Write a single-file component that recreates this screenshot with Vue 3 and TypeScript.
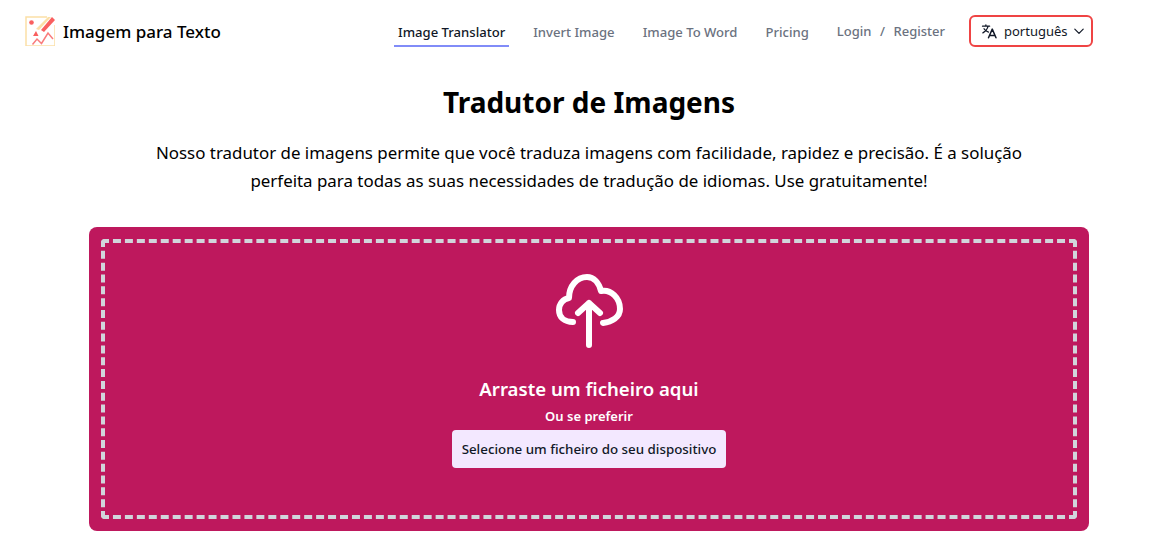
<template>
  <div class="page">
    <header class="topbar">
      <a class="brand">
        <svg class="brand-logo" viewBox="0 0 30 30" width="30" height="30">
          <path d="M22 1H1v29h29V9" fill="none" stroke="#fbdfa6" stroke-width="1.500" />
          <path d="M11 13 L23 1 L26 1 L14 14 Z" fill="#fbdfa6" />
          <path d="M16 14 L27 1 L30 4 L19 16 Z" fill="#f95f5f" />
          <circle cx="6.500" cy="6.500" r="2.300" fill="#f95f5f" />
          <path d="M8 20 L11 15 L13.500 20 Z" fill="#f95f5f" />
          <path d="M7.500 28.500 L12 23 L16.500 27.500 L23 17 L28 23" fill="none" stroke="#f97c7c" stroke-width="1.500" />
        </svg>
        <span class="brand-name">Imagem para Texto</span>
      </a>
      <nav class="nav">
        <a v-for="item in links" :key="item.label" class="nav-link" :class="{ active: item.active }">{{ item.label }}</a>
        <div class="auth">
          <a>Login</a>
          <span>/</span>
          <a>Register</a>
        </div>
        <button class="lang" type="button">
          <svg viewBox="0 0 24 24" width="18" height="18" fill="none" stroke="#111827" stroke-width="2" stroke-linecap="round" stroke-linejoin="round">
            <path d="M2 5.500h9.500M6.500 4v1.500M9.500 5.500c-1 4-3.500 7-7 9M4 9c1 2 3 3.500 6 4.500" stroke-width="1.700" />
            <path d="M10 21l5-11.500 5 11.500M11.500 18h7" />
          </svg>
          <span class="lang-name">português</span>
          <svg viewBox="0 0 20 20" width="12" height="12" fill="none" stroke="#111827" stroke-width="2" stroke-linecap="round" stroke-linejoin="round">
            <path d="M3 7l7 7 7-7" />
          </svg>
        </button>
      </nav>
    </header>

    <main class="content">
      <h1>Tradutor de Imagens</h1>
      <p class="intro">
        Nosso tradutor de imagens permite que você traduza imagens com facilidade, rapidez e precisão. É a solução
        perfeita para todas as suas necessidades de tradução de idiomas. Use gratuitamente!
      </p>
      <section class="upload">
        <div class="drop">
          <svg class="cloud" viewBox="0 0 70 76" width="70" height="76" fill="none" stroke="#fff" stroke-width="6" stroke-linecap="round" stroke-linejoin="round">
            <path d="M19 50 C10 50 5 45 5 38 C5 32 9 27 15 26 C15 14 23 5 33 5 C40 5 45 11 47 19 C57 17 66 26 66 37 C66 45 58 50 49 51" />
            <path d="M35 73 V31 M24 41 L35 31 L46 41" />
          </svg>
          <h2>Arraste um ficheiro aqui</h2>
          <p class="or">Ou se preferir</p>
          <button class="pick" type="button">Selecione um ficheiro do seu dispositivo</button>
        </div>
      </section>
    </main>
  </div>
</template>

<script setup lang="ts">
  const links = [
    { label: 'Image Translator', active: true },
    { label: 'Invert Image', active: false },
    { label: 'Image To Word', active: false },
    { label: 'Pricing', active: false },
  ];
</script>

<style>
  html,
  body {
    margin: 0;
    background: #fff;
  }
</style>

<style scoped>
  .page {
    width: 1151px;
    height: 544px;
    overflow: hidden;
    font-family: 'Noto Sans', 'Open Sans', sans-serif;
    color: #000;
  }

  .topbar {
    display: flex;
    align-items: center;
    justify-content: space-between;
    height: 62px;
    padding: 0 58px 0 25px;
  }

  .brand {
    display: flex;
    align-items: center;
    gap: 8px;
  }

  .brand-name {
    font-size: 17px;
    font-weight: 500;
  }

  .nav {
    display: flex;
    align-items: center;
    gap: 20px;
  }

  .nav-link {
    padding: 8px 4px 4px;
    font-size: 13.1px;
    font-weight: 500;
    color: #6b7280;
    border-bottom: 2px solid transparent;
  }

  .nav-link.active {
    color: #111827;
    border-bottom-color: #818cf8;
  }

  .auth {
    display: flex;
    gap: 8.500px;
    padding-left: 4px;
    font-size: 13px;
    font-weight: 500;
    color: #6b7280;
  }

  .lang {
    display: flex;
    align-items: center;
    box-sizing: border-box;
    width: 124px;
    height: 32px;
    margin-left: 4px;
    padding: 0 6px 0 10px;
    background: #fff;
    border: 2px solid #ef4444;
    border-radius: 6px;
    font-family: inherit;
    font-size: 13px;
    color: #111827;
  }

  .lang-name {
    flex: 1;
    padding-left: 5px;
    text-align: left;
  }

  .content {
    display: flex;
    flex-direction: column;
    align-items: center;
    width: 1178px;
  }

  h1 {
    margin: 20px 0 0;
    font-size: 28px;
    line-height: 40px;
    font-weight: 700;
  }

  .intro {
    width: 880px;
    margin: 17px 0 0;
    font-size: 16.9px;
    line-height: 28px;
    text-align: center;
  }

  .upload {
    box-sizing: border-box;
    flex: none;
    width: 1000px;
    height: 304px;
    margin-top: 32px;
    padding: 12px;
    background: #be185d;
    border-radius: 8px;
  }

  .drop {
    display: flex;
    flex-direction: column;
    align-items: center;
    box-sizing: border-box;
    height: 100%;
    padding-top: 29px;
    border: 4px dashed #d1d5db;
    border-radius: 4px;
    color: #fff;
  }

  .cloud {
    display: block;
  }

  h2 {
    margin: 27px 0 0;
    font-size: 18.6px;
    line-height: 28px;
    font-weight: 600;
  }

  .or {
    margin: 3px 0 0;
    font-size: 13px;
    line-height: 20px;
    font-weight: 600;
  }

  .pick {
    height: 38px;
    margin-top: 4px;
    padding: 0 9.500px;
    background: #f3e8ff;
    border: 0;
    border-radius: 4px;
    font-family: inherit;
    font-size: 13.35px;
    font-weight: 500;
    color: #111827;
  }
</style>
